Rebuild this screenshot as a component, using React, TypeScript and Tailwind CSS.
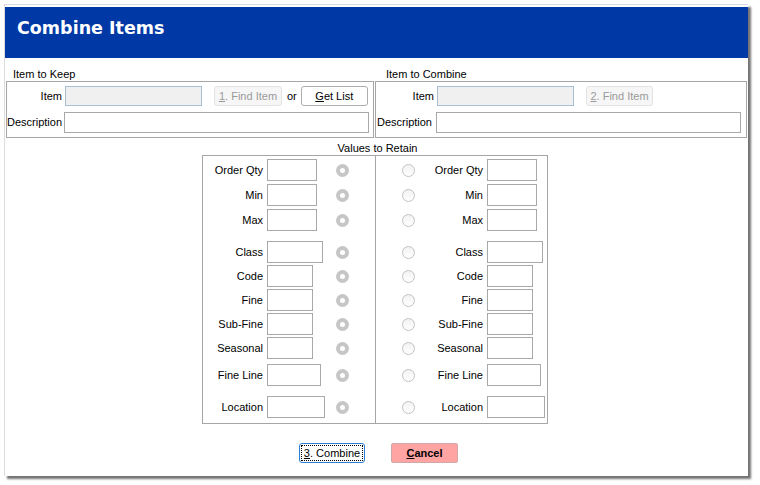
import React from "react";

type Row = { label: string; w: string; gap: string };

const rows: Row[] = [
  { label: "Order Qty", w: "w-[50px]", gap: "mt-[3px]" },
  { label: "Min", w: "w-[50px]", gap: "mt-[3px]" },
  { label: "Max", w: "w-[50px]", gap: "mt-[3px]" },
  { label: "Class", w: "w-[56px]", gap: "mt-[10px]" },
  { label: "Code", w: "w-[46px]", gap: "mt-[2px]" },
  { label: "Fine", w: "w-[46px]", gap: "mt-[2px]" },
  { label: "Sub-Fine", w: "w-[46px]", gap: "mt-[2px]" },
  { label: "Seasonal", w: "w-[46px]", gap: "mt-[2px]" },
  { label: "Fine Line", w: "w-[54px]", gap: "mt-[5px]" },
  { label: "Location", w: "w-[58px]", gap: "mt-[10px]" },
];

function RadioOn() {
  return (
    <div className="flex h-[13px] w-[13px] items-center justify-center rounded-full bg-[#c6c6c6]">
      <div className="h-[5px] w-[5px] rounded-full bg-white" />
    </div>
  );
}

function RadioOff() {
  return <div className="h-[13px] w-[13px] rounded-full border border-[#c2c2c2] bg-gradient-to-b from-[#f2f2f2] to-white" />;
}

function DisabledBtn({ n, w }: { n: string; w: string }) {
  return (
    <div className={`flex h-[20px] ${w} items-center justify-center rounded-[3px] border border-[#e3e3e3] bg-[#f6f6f6] text-[#9a9a9a]`}>
      <span className="underline">{n}</span>. Find Item
    </div>
  );
}

export default function App() {
  return (
    <div className="h-[485px] w-[760px] bg-white pl-[4px] pt-[4px] text-[11px] text-black [font-family:'Liberation_Sans',Arial,sans-serif]">
      <div className="h-[472px] w-[744px] border-l border-t border-[#dcdcdc] bg-white shadow-[3px_3px_2px_rgba(0,0,0,0.55)]">
        <div className="mt-[2px] h-[51px] bg-[#0039a6] pl-[12px] pt-[10px] text-[17.5px] font-bold leading-[22px] text-white [font-family:'DejaVu_Sans',Verdana,sans-serif]">
          Combine Items
        </div>

        <div className="mt-[10px] grid grid-cols-[368px_372px] gap-x-[1px] pl-[1px]">
          <div>
            <div className="h-[13px] pl-[7px] leading-[13px]">Item to Keep</div>
            <div className="h-[57px] border border-[#a6a6a6] pt-[4px]">
              <div className="flex h-[20px] items-center">
                <div className="w-[55px] text-right">Item</div>
                <div className="ml-[3px] h-[20px] w-[137px] border border-[#a9bdd3] bg-[#f0f0f0]" />
                <div className="ml-[12px]">
                  <DisabledBtn n="1" w="w-[68px]" />
                </div>
                <div className="ml-[5px]">or</div>
                <div className="ml-[4px] flex h-[20px] w-[67px] items-center justify-center rounded-[3px] border border-[#adadad] bg-white">
                  <span className="underline">G</span>et List
                </div>
              </div>
              <div className="mt-[6px] flex h-[21px] items-center">
                <div className="w-[55px] text-right">Description</div>
                <div className="ml-[2px] h-[21px] w-[305px] border border-[#a9a9a9] bg-white" />
              </div>
            </div>
          </div>
          <div>
            <div className="h-[13px] pl-[11px] leading-[13px]">Item to Combine</div>
            <div className="h-[57px] border border-[#a6a6a6] pt-[4px]">
              <div className="flex h-[20px] items-center">
                <div className="w-[58px] text-right">Item</div>
                <div className="ml-[3px] h-[20px] w-[137px] border border-[#a9bdd3] bg-[#f0f0f0]" />
                <div className="ml-[12px]">
                  <DisabledBtn n="2" w="w-[67px]" />
                </div>
              </div>
              <div className="mt-[6px] flex h-[21px] items-center">
                <div className="w-[56px] text-right">Description</div>
                <div className="ml-[4px] h-[21px] w-[305px] border border-[#a9a9a9] bg-white" />
              </div>
            </div>
          </div>
        </div>

        <div className="mt-[3px] h-[14px] pl-[2px] text-center leading-[14px]">Values to Retain</div>

        <div className="ml-[197px] flex">
          <div className="h-[269px] w-[174px] border border-[#a6a6a6]">
            {rows.map((r, i) => (
              <div key={r.label} className={`flex h-[22px] items-center ${i === 0 ? "mt-[3px]" : r.gap}`}>
                <div className="w-[60px] text-right">{r.label}</div>
                <div className="ml-[4px] w-[69px]">
                  <div className={`h-[22px] ${r.w} border border-[#a9a9a9] bg-white`} />
                </div>
                <RadioOn />
              </div>
            ))}
          </div>
          <div className="h-[269px] w-[172px] border-b border-r border-t border-[#a6a6a6] pl-[26px]">
            {rows.map((r, i) => (
              <div key={r.label} className={`flex h-[22px] items-center ${i === 0 ? "mt-[3px]" : r.gap}`}>
                <RadioOff />
                <div className="w-[68px] text-right">{r.label}</div>
                <div className={`ml-[4px] h-[22px] ${r.w} border border-[#a9a9a9] bg-white`} />
              </div>
            ))}
          </div>
        </div>

        <div className="mt-[19px] flex pl-[294px]">
          <div className="flex h-[20px] w-[66px] items-center justify-center rounded-[3px] border border-[#2f7fd0] bg-white p-[1px]">
            <div className="flex h-full w-full items-center justify-center border border-dotted border-black">
              <span className="underline">3</span>. Combine
            </div>
          </div>
          <div className="ml-[26px] flex h-[20px] w-[67px] items-center justify-center rounded-[2px] border border-[#d0a8a8] bg-[#ffa3a3] font-bold">
            <span className="underline">C</span>ancel
          </div>
        </div>
      </div>
    </div>
  );
}
